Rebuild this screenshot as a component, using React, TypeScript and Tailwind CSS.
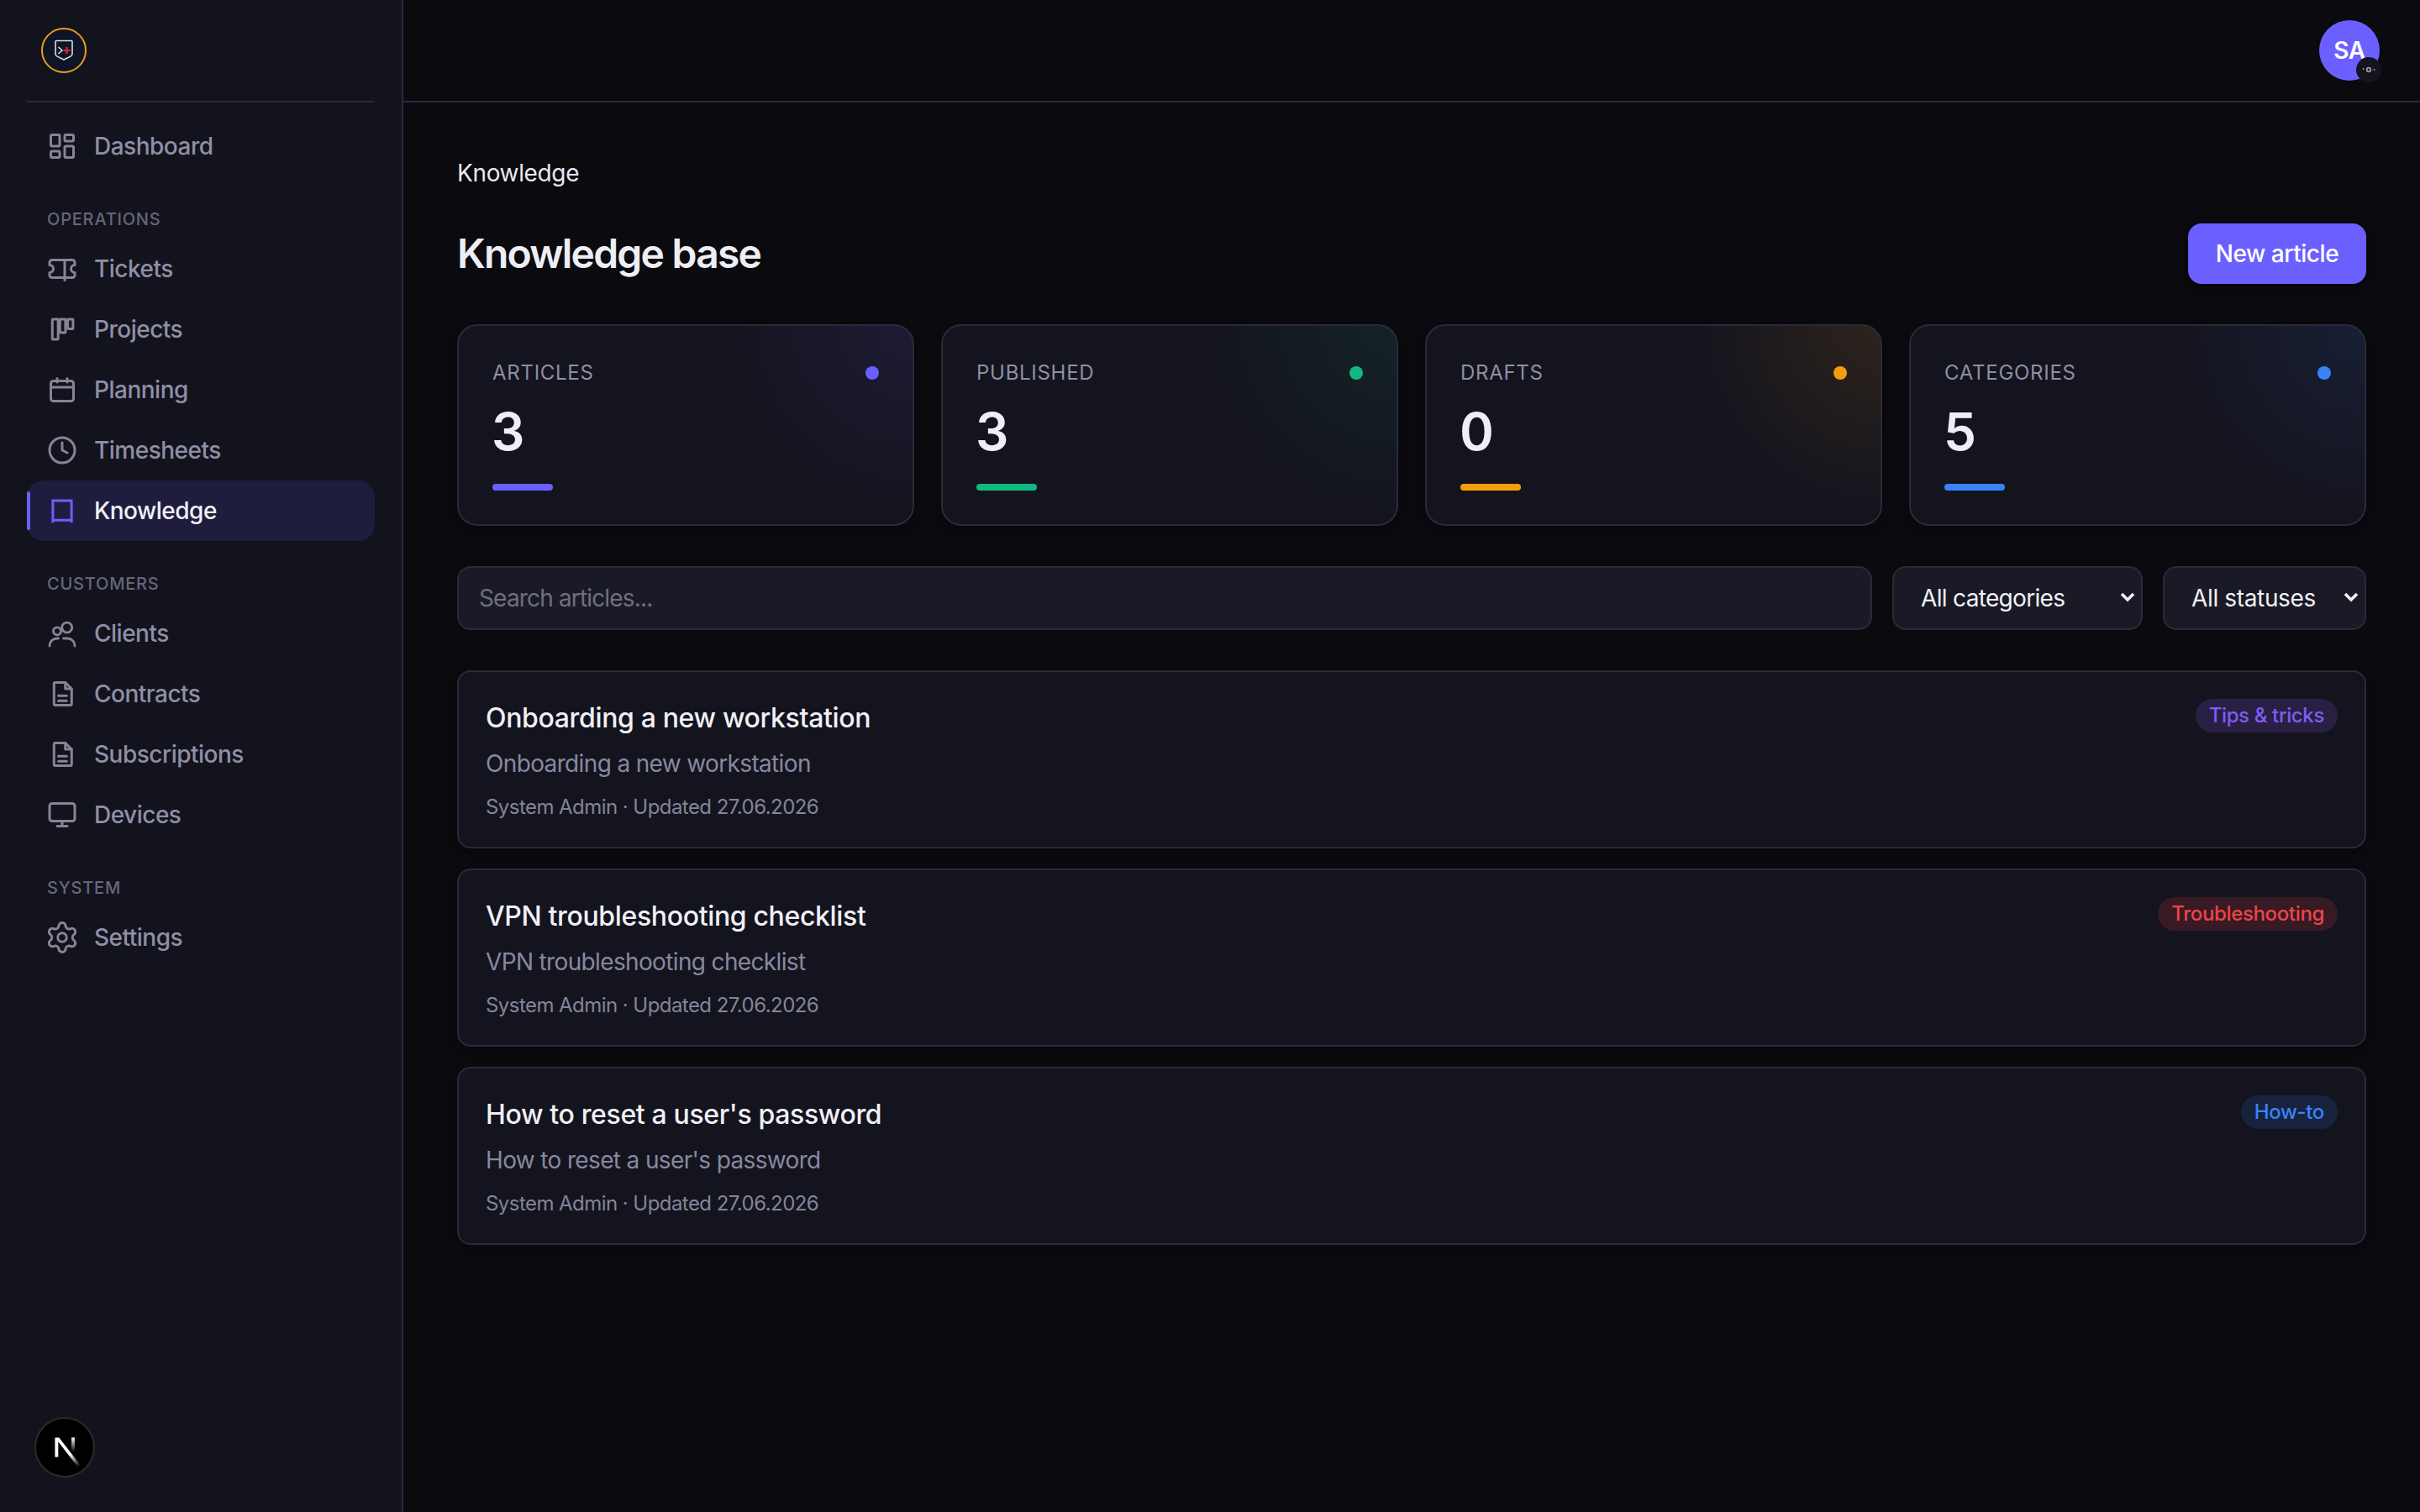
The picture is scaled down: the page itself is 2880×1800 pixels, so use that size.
import { Clock, LayoutDashboard, Monitor, Settings } from "lucide-react";
import type { ReactNode } from "react";

const TicketIcon = () => (
  <svg width="36" height="36" viewBox="0 0 24 24" fill="none" stroke="currentColor" strokeWidth="2" strokeLinecap="round" strokeLinejoin="round">
    <path d="M2 9a3 3 0 0 1 0 6v2a2 2 0 0 0 2 2h16a2 2 0 0 0 2-2v-2a3 3 0 0 1 0-6V7a2 2 0 0 0-2-2H4a2 2 0 0 0-2 2Z" />
    <path d="M14 6v15" />
  </svg>
);

const KanbanIcon = () => (
  <svg width="36" height="36" viewBox="0 0 24 24" fill="none" stroke="currentColor" strokeWidth="2">
    <rect x="4.2" y="4" width="4.6" height="16" rx="0.5" />
    <rect x="10.2" y="4" width="4.4" height="10.6" rx="0.5" />
    <rect x="16.4" y="4" width="4.2" height="7.6" rx="0.5" />
  </svg>
);

const CalendarIcon = () => (
  <svg width="36" height="36" viewBox="0 0 24 24" fill="none" stroke="currentColor" strokeWidth="2" strokeLinecap="round">
    <rect x="3" y="5" width="18" height="16" rx="2" />
    <path d="M8 3v3M16 3v3M3 10h18" />
  </svg>
);

const BookIcon = () => (
  <svg width="36" height="36" viewBox="0 0 24 24" fill="none" stroke="currentColor" strokeWidth="2">
    <path d="M4.600 21.500V4h14.800v17.500" />
    <path d="M4.600 19.500h14.800" />
  </svg>
);

const UsersIcon = () => (
  <svg width="36" height="36" viewBox="0 0 24 24" fill="none" stroke="currentColor" strokeWidth="1.9" strokeLinecap="round">
    <circle cx="15.800" cy="7.400" r="4" />
    <circle cx="8" cy="10.200" r="3" />
    <path d="M2 22c0-3.400 2.600-6 6-6h1" />
    <path d="M13 16h3c3.400 0 6 2.600 6 6" />
  </svg>
);

const DocIcon = () => (
  <svg width="36" height="36" viewBox="0 0 24 24" fill="none" stroke="currentColor" strokeWidth="2" strokeLinejoin="round" strokeLinecap="round">
    <path d="M14.500 3H6.500a1 1 0 0 0-1 1v16a1 1 0 0 0 1 1h12a1 1 0 0 0 1-1V8z" />
    <path d="M14.500 3v5h5" />
    <path d="M9 13.500h6.500" />
    <path d="M9 17.500h6.500" />
  </svg>
);

type NavItem = { label: string; icon: ReactNode; active?: boolean };

const Item = ({ label, icon, active }: NavItem) => (
  <a
    className={
      active
        ? "relative flex h-[72px] items-center gap-[20px] rounded-[20px] bg-[#1f1d3d] pl-[24px] text-[28px] font-medium tracking-[-0.018em] text-[#f0f0f5]"
        : "flex h-[72px] items-center gap-[20px] pl-[24px] text-[28px] font-[450] tracking-[-0.018em] text-[#8f8fa6]"
    }
  >
    {active && <span className="absolute left-0 top-[13px] h-[46px] w-[4px] rounded-full bg-[#6c5fff]" />}
    <span className={active ? "flex w-[36px] justify-center text-[#6c5fff]" : "flex w-[36px] justify-center text-[#858596]"}>{icon}</span>
    <span>{label}</span>
  </a>
);

const Section = ({ title }: { title: string }) => (
  <div className="pb-[11px] pl-[24px] pt-[39px] text-[20px] font-medium uppercase leading-[24px] tracking-[0.04em] text-[#66667a]">
    {title}
  </div>
);

const stats = [
  {
    label: "Articles",
    value: 3,
    dot: "bg-[#6c5fff]",
    glow: "bg-[radial-gradient(circle_at_100%_0%,rgba(108,95,255,0.1),transparent_230px),linear-gradient(#14141e,#14141e)]",
  },
  {
    label: "Published",
    value: 3,
    dot: "bg-[#10b981]",
    glow: "bg-[radial-gradient(circle_at_100%_0%,rgba(16,185,129,0.09),transparent_230px),linear-gradient(#14141e,#14141e)]",
  },
  {
    label: "Drafts",
    value: 0,
    dot: "bg-[#f59e0b]",
    glow: "bg-[radial-gradient(circle_at_100%_0%,rgba(245,158,11,0.11),transparent_230px),linear-gradient(#14141e,#14141e)]",
  },
  {
    label: "Categories",
    value: 5,
    dot: "bg-[#3b82f6]",
    glow: "bg-[radial-gradient(circle_at_100%_0%,rgba(59,130,246,0.1),transparent_230px),linear-gradient(#14141e,#14141e)]",
  },
];

const articles = [
  { title: "Onboarding a new workstation", tag: "Tips & tricks", tagClass: "bg-[#291f43] text-[#7f5cf6]" },
  { title: "VPN troubleshooting checklist", tag: "Troubleshooting", tagClass: "bg-[#371a24] text-[#ef4444]" },
  { title: "How to reset a user's password", tag: "How-to", tagClass: "bg-[#17233d] text-[#3b82f6]" },
];

const Chevron = () => (
  <svg
    className="pointer-events-none absolute right-[9px] top-[30px] text-[#f0f0f5]"
    width="18"
    height="14"
    viewBox="0 0 18 14"
    fill="none"
    stroke="currentColor"
    strokeWidth="3.600"
  >
    <path d="M2 3l7 7 7-7" />
  </svg>
);

const App = () => {
  return (
    <div className="flex h-screen w-full overflow-hidden bg-[#0a0a0f] font-['Inter',sans-serif] text-[#f0f0f5] tracking-[-0.022em]">
      {/* Sidebar */}
      <aside className="relative flex w-[480px] shrink-0 flex-col border-r-2 border-[#2a2a3a] bg-[#13131d] pl-[32px] pr-[32px]">
        <div className="flex h-[122px] shrink-0 items-center border-b-2 border-[#2a2a3a] pl-[17px]">
          <div className="flex h-[54px] w-[54px] items-center justify-center rounded-full border-2 border-[#e89c1c] bg-[#0d1526]">
            <svg width="24" height="28" viewBox="0 0 24 28" fill="none">
              <path
                d="M3 2.500h18a1 1 0 0 1 1 1V18c0 1.500-.6 2.400-2 3.100l-8 3.900-8-3.900c-1.400-.7-2-1.600-2-3.100V3.500a1 1 0 0 1 1-1z"
                stroke="#d9dbe3"
                strokeWidth="1.600"
              />
              <path d="M5.500 10l4.500 4-4.500 4" stroke="#d9dbe3" strokeWidth="1.600" />
              <path d="M11.500 14h8M15.500 10v8" stroke="#e5202e" strokeWidth="2.200" />
            </svg>
          </div>
        </div>

        <nav className="flex flex-col pt-[16px]">
          <Item label="Dashboard" icon={<LayoutDashboard size={36} />} />
          <Section title="Operations" />
          <Item label="Tickets" icon={<TicketIcon />} />
          <Item label="Projects" icon={<KanbanIcon />} />
          <Item label="Planning" icon={<CalendarIcon />} />
          <Item label="Timesheets" icon={<Clock size={36} />} />
          <Item label="Knowledge" icon={<BookIcon />} active />
          <Section title="Customers" />
          <Item label="Clients" icon={<UsersIcon />} />
          <Item label="Contracts" icon={<DocIcon />} />
          <Item label="Subscriptions" icon={<DocIcon />} />
          <Item label="Devices" icon={<Monitor size={36} />} />
          <Section title="System" />
          <Item label="Settings" icon={<Settings size={42} strokeWidth={1.7} className="shrink-0" />} />
        </nav>

        {/* Next.js dev badge */}
        <div className="absolute bottom-[41px] left-[41px] flex h-[72px] w-[72px] items-center justify-center rounded-full border-2 border-[#2b2b28] bg-black">
          <svg width="58" height="58" viewBox="0 0 180 180" fill="none">
            <defs>
              <linearGradient id="next-a" x1="109" y1="116.500" x2="144.500" y2="160.500" gradientUnits="userSpaceOnUse">
                <stop stopColor="white" />
                <stop offset="1" stopColor="white" stopOpacity="0" />
              </linearGradient>
              <linearGradient id="next-b" x1="121" y1="54" x2="120.800" y2="106.900" gradientUnits="userSpaceOnUse">
                <stop stopColor="white" />
                <stop offset="1" stopColor="white" stopOpacity="0" />
              </linearGradient>
            </defs>
            <path
              d="M149.508 157.52L69.142 54H54V125.97H66.1136V69.3836L139.999 164.845C143.333 162.614 146.509 160.165 149.508 157.52Z"
              fill="url(#next-a)"
            />
            <rect x="115" y="54" width="12" height="72" fill="url(#next-b)" />
          </svg>
        </div>
      </aside>

      {/* Main */}
      <div className="flex min-w-0 flex-1 flex-col">
        <header className="flex h-[122px] shrink-0 items-center justify-end border-b-2 border-[#2a2a3a] pr-[48px]">
          <div className="relative flex h-[72px] w-[72px] items-center justify-center rounded-full bg-[#6c5fff] text-[28px] font-semibold text-white">
            SA
            <span className="absolute right-[-2px] top-[44px] flex h-[30px] w-[30px] items-center justify-center rounded-full bg-[#14141e]">
              <svg width="16" height="10" viewBox="0 0 16 10" fill="none" stroke="#9a9aa6">
                <circle cx="8" cy="5" r="2.300" strokeWidth="1.800" />
                <path d="M1.500 3v2M14.500 4v2" strokeWidth="1.500" />
              </svg>
            </span>
          </div>
        </header>

        <main className="flex flex-col px-[64px] pt-[64px]">
          <div className="text-[28px] leading-[40px] text-[#e8e8f0]">Knowledge</div>

          <div className="mt-[40px] flex items-center justify-between">
            <h1 className="text-[48px] font-semibold tracking-[-0.037em] text-[#eeeef4]">Knowledge base</h1>
            <button className="flex h-[72px] w-[212px] items-center justify-center rounded-[16px] bg-[#6c5fff] text-[28px] font-medium tracking-[-0.016em] text-white shadow-[0_4px_12px_rgba(0,0,0,0.3)]">
              New article
            </button>
          </div>

          <div className="mt-[48px] grid grid-cols-4 gap-[32px]">
            {stats.map((s) => (
              <div
                key={s.label}
                className={`h-[240px] rounded-[24px] border-2 border-[#2a2a3a] p-[40px] shadow-[0_4px_12px_rgba(0,0,0,0.25)] ${s.glow}`}
              >
                <div className="flex items-center justify-between">
                  <span className="text-[24px] uppercase leading-[31px] tracking-[0.03em] text-[#8f8fa3]">{s.label}</span>
                  <span className={`h-[16px] w-[16px] rounded-full ${s.dot}`} />
                </div>
                <div className="-ml-[1px] mt-[19px] text-[62px] font-semibold leading-[72px] text-[#eeeef4]">{s.value}</div>
                <div className={`mt-[26px] h-[8px] w-[72px] rounded-full ${s.dot}`} />
              </div>
            ))}
          </div>

          <div className="mt-[48px] flex gap-[24px]">
            <input
              placeholder="Search articles..."
              className="h-[76px] min-w-0 flex-1 rounded-[16px] border-2 border-[#2a2a3a] bg-[#1a1a26] px-[24px] text-[28px] tracking-[-0.03em] text-[#f0f0f5] outline-none placeholder:text-[#6f6f82]"
            />
            <div className="relative w-[298px]">
              <select className="h-[76px] w-full appearance-none rounded-[16px] border-2 border-[#2a2a3a] bg-[#1a1a26] pl-[32px] text-[28px] tracking-[-0.024em] text-[#f0f0f5] outline-none">
                <option>All categories</option>
              </select>
              <Chevron />
            </div>
            <div className="relative w-[242px]">
              <select className="h-[76px] w-full appearance-none rounded-[16px] border-2 border-[#2a2a3a] bg-[#1a1a26] pl-[32px] text-[28px] text-[#f0f0f5] outline-none">
                <option>All statuses</option>
              </select>
              <Chevron />
            </div>
          </div>

          <div className="mt-[48px] flex flex-col gap-[24px]">
            {articles.map((a) => (
              <div
                key={a.title}
                className="flex h-[212px] items-start justify-between rounded-[16px] border-2 border-[#2a2a3a] bg-[#14141e] p-[32px] shadow-[0_4px_12px_rgba(0,0,0,0.25)]"
              >
                <div className="flex flex-col">
                  <div className="text-[32px] font-medium leading-[46px] text-[#f0f0f5]">{a.title}</div>
                  <div className="mt-[10px] text-[28px] leading-[42px] tracking-[-0.023em] text-[#8888a0]">{a.title}</div>
                  <div className="mt-[14px] text-[24px] leading-[34px] tracking-[-0.023em] text-[#84849a]">System Admin · Updated 27.06.2026</div>
                </div>
                <span className={`flex h-[40px] items-center rounded-full px-[16px] text-[24px] font-medium ${a.tagClass}`}>{a.tag}</span>
              </div>
            ))}
          </div>
        </main>
      </div>
    </div>
  );
};

export default App;
